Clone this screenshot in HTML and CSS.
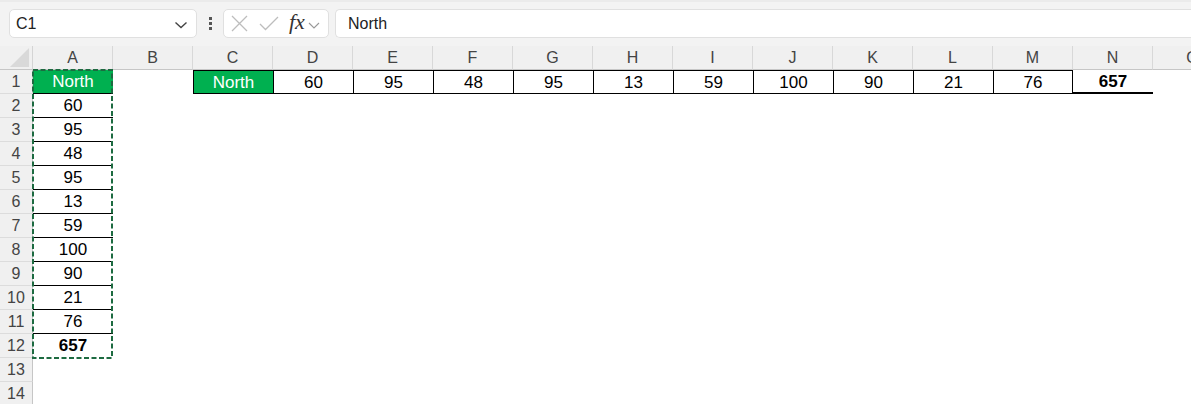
FILE: index.html
```html
<!DOCTYPE html>
<html>
<head>
<meta charset="utf-8">
<link rel="stylesheet" href="styles.css">
</head>
<body>
<div class="toolbar">
  <div class="namebox">
    <span class="name">C1</span>
    <svg class="chev" width="14" height="8" viewBox="0 0 14 8"><path d="M1.5 1.5 L7 6.5 L12.5 1.5" fill="none" stroke="#444" stroke-width="1.4"/></svg>
  </div>
  <div class="dots"><i></i><i></i><i></i></div>
  <div class="fbuttons">
    <svg class="xicon" width="17" height="17" viewBox="0 0 17 17"><path d="M1 1 L16 16 M16 1 L1 16" stroke="#bdbdbd" stroke-width="1.3" fill="none"/></svg>
    <svg class="check" width="20" height="15" viewBox="0 0 20 15"><path d="M1 8 L6.5 13.5 L19 1" stroke="#bdbdbd" stroke-width="1.3" fill="none"/></svg>
    <span class="fx">fx</span>
    <svg class="chev2" width="12" height="7" viewBox="0 0 12 7"><path d="M1 1 L6 6 L11 1" fill="none" stroke="#999" stroke-width="1.1"/></svg>
  </div>
  <div class="formula">North</div>
</div>
<div class="sheet">
  <div class="corner"><svg width="22" height="22" viewBox="0 0 22 22"><path d="M21 1 L21 21 L1 21 Z" fill="#d9d9d9"/></svg></div>
  <div class="ch">A</div><div class="ch">B</div><div class="ch">C</div><div class="ch">D</div><div class="ch">E</div><div class="ch">F</div><div class="ch">G</div><div class="ch">H</div><div class="ch">I</div><div class="ch">J</div><div class="ch">K</div><div class="ch">L</div><div class="ch">M</div><div class="ch">N</div><div class="ch">O</div>

  <div class="rh">1</div>
  <div class="c green">North</div><div class="c"></div>
  <div class="c green boxl">North</div>
  <div class="c box">60</div><div class="c box">95</div><div class="c box">48</div><div class="c box">95</div><div class="c box">13</div><div class="c box">59</div><div class="c box">100</div><div class="c box">90</div><div class="c box">21</div><div class="c box">76</div>
  <div class="c total">657</div><div class="c"></div>

  <div class="rh">2</div><div class="c a">60</div><div class="c rest"></div>
  <div class="rh">3</div><div class="c a">95</div><div class="c rest"></div>
  <div class="rh">4</div><div class="c a">48</div><div class="c rest"></div>
  <div class="rh">5</div><div class="c a">95</div><div class="c rest"></div>
  <div class="rh">6</div><div class="c a">13</div><div class="c rest"></div>
  <div class="rh">7</div><div class="c a">59</div><div class="c rest"></div>
  <div class="rh">8</div><div class="c a">100</div><div class="c rest"></div>
  <div class="rh">9</div><div class="c a">90</div><div class="c rest"></div>
  <div class="rh">10</div><div class="c a">21</div><div class="c rest"></div>
  <div class="rh">11</div><div class="c a">76</div><div class="c rest"></div>
  <div class="rh">12</div><div class="c a bold">657</div><div class="c rest"></div>
  <div class="rh">13</div><div class="c"></div><div class="c rest"></div>
  <div class="rh">14</div><div class="c"></div><div class="c rest"></div>

  <div class="ants"><svg width="81" height="290" viewBox="0 0 81 290"><rect x="1" y="1" width="79" height="288" fill="none" stroke="#1d6b41" stroke-width="2" stroke-dasharray="5 2.5"/></svg></div>
</div>
</body>
</html>
```
FILE: styles.css
```css
* { box-sizing: border-box; }
html, body { margin: 0; padding: 0; background: #ffffff; overflow: hidden; }
body { width: 1191px; height: 404px; font-family: "Liberation Sans", Arial, sans-serif; }

.toolbar {
  height: 46px;
  background: #f3f3f3;
  display: flex;
  align-items: flex-start;
  padding: 7px 0 0 9px;
  border-top: 2px solid #ebebeb;
}
.namebox {
  width: 188px; height: 29px;
  background: #fff;
  border: 1px solid #e0e0e0;
  border-radius: 5px;
  display: flex; align-items: center; justify-content: space-between;
  padding: 0 8px 0 6px;
}
.name { font-size: 16px; color: #222; }
.chev { margin-top: 2px; }
.dots {
  width: 26px; height: 29px;
  display: flex; flex-direction: column; align-items: center; justify-content: center; gap: 2px;
}
.dots i { display: block; width: 3px; height: 3px; background: #555; }
.fbuttons {
  width: 106px; height: 29px;
  background: #fff;
  border: 1px solid #e0e0e0;
  border-radius: 5px;
  display: flex; align-items: center;
  padding-left: 7px;
}
.xicon { margin-right: 11px; }
.check { margin-right: 10px; }
.fx {
  font-family: "Liberation Serif", "Times New Roman", serif;
  font-style: italic; font-size: 22px; color: #333;
  margin-right: 3px; margin-top: -3px;
}
.chev2 { margin-top: 3px; }
.formula {
  margin-left: 6px;
  flex: 1; height: 29px;
  background: #fff;
  border: 1px solid #e0e0e0;
  border-right: none;
  border-radius: 5px 0 0 5px;
  font-size: 16px; color: #222;
  padding-left: 12px;
  line-height: 27px;
}

.sheet {
  display: grid;
  grid-template-columns: 33px repeat(15, 80px);
  grid-template-rows: 24px repeat(14, 24px);
  width: 1191px;
  overflow: hidden;
  position: relative;
}
.corner {
  background: #f0f0f0;
  border-right: 1px solid #d4d4d4;
  border-bottom: 1px solid #c6c6c6;
  display: flex; align-items: flex-end; justify-content: flex-end;
  padding: 0 2px 1px 0;
}
.corner svg { width: 21px; height: 21px; }
.ch {
  background: #f0f0f0;
  border-right: 1px solid #d8d8d8;
  border-bottom: 1px solid #c6c6c6;
  text-align: center;
  font-size: 16px; line-height: 24px;
  color: #444;
}
.rh {
  background: #f0f0f0;
  border-right: 1px solid #c6c6c6;
  border-bottom: 1px solid #dcdcdc;
  text-align: center;
  font-size: 16px; line-height: 24px;
  color: #444;
}
.c {
  font-size: 17px; line-height: 24px;
  text-align: center;
  color: #000;
}
.rest { grid-column: 3 / span 14; }
.green { background: #00b050; color: #fff; }
.a { border-bottom: 1px solid #000; }
.sheet > .green:nth-child(18) { border-bottom: 1px solid #000; }
.boxl { border: 1px solid #000; border-right: none; }
.box { border-top: 1px solid #000; border-bottom: 1px solid #000; border-left: 1px solid #000; }
.box:nth-child(30) { border-right: 1px solid #000; }
.total { font-weight: bold; border-bottom: 2px solid #000; line-height: 23px; }
.bold { font-weight: bold; border-bottom: none; }
.ants {
  position: absolute;
  left: 32px; top: 23px;
  width: 81px; height: 290px;
  z-index: 2;
  pointer-events: none;
}
.ants svg { display: block; }
```
